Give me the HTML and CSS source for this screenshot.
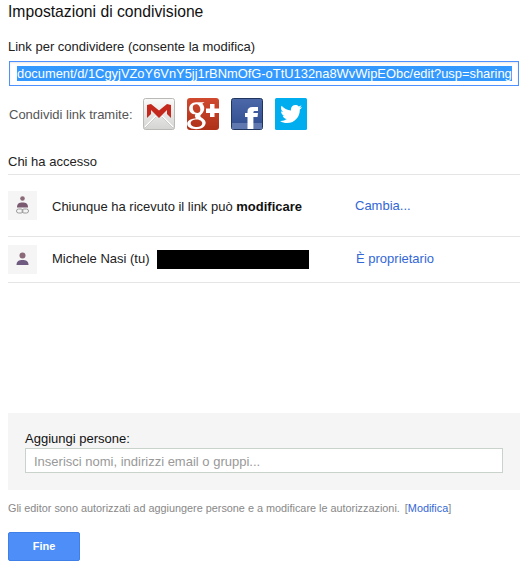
FILE: index.html
```html
<!DOCTYPE html>
<html lang="it">
<head>
<meta charset="utf-8">
<title>Impostazioni di condivisione</title>
<link rel="stylesheet" href="styles.css">
</head>
<body>
<main class="dialog">
  <h1 class="title">Impostazioni di condivisione</h1>
  <div class="link-label">Link per condividere (consente la modifica)</div>
  <div class="link-box"><span class="link-text">document/d/1CgyjVZoY6VnY5jj1rBNmOfG-oTtU132na8WvWipEObc/edit?usp=sharing</span></div>
  <div class="share-row">
    <span class="share-label">Condividi link tramite:</span>
    <div class="share-icons">
      <svg class="icon" viewBox="0 0 32 32" aria-label="Gmail">
        <defs><linearGradient id="gm" x1="0" y1="0" x2="0" y2="1"><stop offset="0" stop-color="#fafafa"/><stop offset="1" stop-color="#d4d4d2"/></linearGradient></defs>
        <rect x=".5" y=".5" width="31" height="31" rx="2" fill="url(#gm)" stroke="#b9b9b5"/>
        <path d="M2 29 L13 18 M30 29 L19 18" stroke="#fff" stroke-width="1.4" fill="none"/>
        <path d="M2 30 L13 19 M30 30 L19 19" stroke="#bdbdb9" stroke-width=".7" fill="none"/>
        <path d="M4 7 L8 6 L16 12.500 L24 6 L28 7 L28 20 L24 16 L24 12 L16 20 L8 12 L8 16 L4 20 Z" fill="#c4281c"/>
      </svg>
      <svg class="icon" viewBox="0 0 32 32" aria-label="Google+">
        <defs><linearGradient id="gp" x1="0" y1="0" x2="0" y2="1"><stop offset="0" stop-color="#d04a2f"/><stop offset="1" stop-color="#ad3017"/></linearGradient></defs>
        <rect width="32" height="32" rx="3" fill="url(#gp)"/>
        <path d="M23 6 H27.500 V10.500 H32 V15 H27.500 V19 H23 V15 H19 V10.500 H23 Z" fill="#fff"/>
        <path d="M15.500 6 H8.500 C4.500 6 2.500 9 2.500 12 C2.500 15 4.700 17.200 7.800 17.200 C6.900 19 7.400 19.800 8.300 20.800 C4.800 21 .8 22.500 .8 26 C.8 29.500 4.500 31 8.500 31 C13 31 16.500 28.500 16.500 25 C16.500 21.500 12 20.500 12 18.800 C12 17.300 15.300 16 15.300 11.500 C15.300 9.800 14.500 8.500 13.600 7.500 L15.500 6 Z M8.500 8 C10.700 8 12 10.500 12 13 C12 15 10.800 16 9.300 16 C7 16 5.600 13.500 5.600 11 C5.600 9 6.800 8 8.500 8 Z M8.800 22 C11.500 22 13.600 23.500 13.600 25.600 C13.600 27.700 11.700 29 9 29 C6 29 3.800 27.600 3.800 25.400 C3.800 23.300 6 22 8.800 22 Z" fill="#fff" fill-rule="evenodd" transform="translate(-.8 -2.300) scale(1.180 1.080)"/>
      </svg>
      <svg class="icon" viewBox="0 0 32 32" aria-label="Facebook">
        <defs><linearGradient id="fb" x1="0" y1="0" x2="0" y2="1"><stop offset="0" stop-color="#4c68a8"/><stop offset="1" stop-color="#2f4c8e"/></linearGradient></defs>
        <rect x=".5" y=".5" width="31" height="31" rx="2" fill="url(#fb)" stroke="#21365f"/>
        <rect x="1" y="25" width="30" height="6" fill="#5f79b0"/>
        <path d="M16.500 31 V19 H14 V15 H16.500 V13.500 C16.500 10.500 18.200 9 21.500 9 H27 V13 H24 C22.800 13 22.400 13.500 22.400 14.500 V15 H27 L26.500 19 H22.400 V31 Z" fill="#fff"/>
      </svg>
      <svg class="icon" viewBox="0 0 32 32" aria-label="Twitter">
        <rect width="32" height="32" rx="1.500" fill="#00aeef"/>
        <path d="M26.500 8.500 C25.700 8.900 24.900 9.100 24 9.200 C24.900 8.600 25.600 7.800 25.900 6.800 C25 7.300 24.100 7.700 23.100 7.900 C22.300 7 21.100 6.500 19.800 6.500 C17.300 6.500 15.300 8.500 15.300 11 C15.300 11.400 15.300 11.700 15.400 12 C11.600 11.800 8.300 10 6 7.300 C5.600 8 5.400 8.700 5.400 9.500 C5.400 11.100 6.200 12.500 7.400 13.300 C6.700 13.300 6 13.100 5.400 12.700 C5.400 15 7 16.800 9 17.200 C8.300 17.400 7.700 17.400 7 17.300 C7.600 19.100 9.300 20.400 11.200 20.500 C9.200 22 6.900 22.600 4.500 22.400 C6.500 23.700 8.900 24.500 11.400 24.500 C19.700 24.500 24.200 17.600 24.200 11.700 V11.100 C25.100 10.400 25.900 9.500 26.500 8.500 Z" fill="#fff" transform="translate(.6 .5)"/>
      </svg>
    </div>
  </div>

  <h2 class="access-title">Chi ha accesso</h2>
  <div class="access-list">
    <div class="access-row access-row-link">
      <div class="avatar">
        <svg class="avatar-icon" viewBox="0 0 29 29">
          <circle cx="14.500" cy="7.500" r="2.300" fill="#8a6a78"/>
          <path d="M9 16.500 C9 12.500 11 11.500 14.500 11.500 C18 11.500 20 12.500 20 16.500 Z" fill="#7a5a70"/>
          <rect x="8.500" y="18" width="6.500" height="4" rx="2" fill="none" stroke="#9a9a9a"/>
          <rect x="14" y="18" width="6.500" height="4" rx="2" fill="none" stroke="#9a9a9a"/>
        </svg>
      </div>
      <div class="who who-link">Chiunque ha ricevuto il link può <b>modificare</b></div>
      <a class="role">Cambia...</a>
    </div>
    <div class="access-row access-row-owner">
      <div class="avatar">
        <svg class="avatar-icon" viewBox="0 0 29 29">
          <circle cx="14.500" cy="10.500" r="3" fill="#8a6a78"/>
          <path d="M8.500 20 C8.500 16 11 15 14.500 15 C18 15 20.500 16 20.500 20 Z" fill="#6f5a80"/>
        </svg>
      </div>
      <div class="who who-owner"><span class="owner-name">Michele Nasi (tu)</span><span class="redacted"></span></div>
      <a class="role role-owner">È proprietario</a>
    </div>
  </div>

  <section class="add-panel">
    <label class="add-label">Aggiungi persone:</label>
    <div class="add-input">Inserisci nomi, indirizzi email o gruppi...</div>
  </section>

  <p class="note">Gli editor sono autorizzati ad aggiungere persone e a modificare le autorizzazioni. <span class="note-link">[<a>Modifica</a>]</span></p>

  <button class="done" type="button">Fine</button>
</main>
</body>
</html>
```

FILE: styles.css
```css
* { box-sizing: border-box; }
html, body { margin: 0; padding: 0; background: #fff; }
body { font-family: "Liberation Sans", Arial, sans-serif; color: #111; height: 568px; overflow: hidden; }
.dialog { width: 520px; padding: 0 0 0 8px; }
.title { margin: 0; padding-top: 3px; font-size: 15.700px; font-weight: 400; line-height: 18px; color: #111; }
.link-label { margin-top: 18px; font-size: 13px; line-height: 16px; color: #222; }
.link-box { margin: 6px 0 0 1px; width: 510px; height: 25px; border: 1px solid #4d90fe; box-shadow: inset 0 1px 2px rgba(0,0,0,.1); padding: 4px 7px; overflow: hidden; white-space: nowrap; font-size: 12.900px; line-height: 15px; }
.link-text { background: #3399ff; color: #fff; }
.share-row { display: flex; align-items: center; margin-top: 12px; padding-left: 1px; height: 32px; }
.share-label { width: 134px; font-size: 13px; color: #555; }
.share-icons { display: flex; gap: 12px; }
.icon { width: 32px; height: 32px; display: block; }
.access-title { margin: 24px 0 0; font-size: 13px; font-weight: 400; line-height: 15px; color: #222; }
.access-list { margin-top: 5px; width: 512px; border-top: 1px solid #e5e5e5; }
.access-row { display: flex; align-items: center; border-bottom: 1px solid #e5e5e5; }
.access-row-link { height: 62px; }
.access-row-owner { height: 46px; }
.avatar { width: 29px; height: 29px; background: #f5f5f5; flex: none; }
.avatar-icon { display: block; width: 29px; height: 29px; }
.who { width: 318px; padding-left: 15px; font-size: 13px; color: #222; }
.who-link { padding-top: 2px; }
.who b { font-weight: 700; color: #111; }
.who-owner { display: flex; align-items: center; }
.owner-name { padding-bottom: 3px; }
.redacted { display: block; width: 152px; height: 19px; margin-left: 7px; background: #000; }
.role { font-size: 13px; color: #3367d6; }
.role-owner { margin-left: 1px; padding-bottom: 3px; }
.add-panel { margin-top: 130px; width: 512px; height: 77px; background: #f5f5f5; padding: 18px 17px 0; }
.add-label { display: block; font-size: 13px; line-height: 16px; color: #111; }
.add-input { margin-top: 1px; width: 478px; height: 25px; background: #fff; border: 1px solid #c9d3cc; padding: 0 8px; font-size: 13px; line-height: 25px; color: #999; }
.note { margin: 12px 0 0; font-size: 10.850px; line-height: 13px; color: #888; }
.note-link { margin-left: 2px; color: #888; }
.note-link a { color: #3367d6; }
.done { display: block; margin-top: 17px; width: 72px; height: 29px; padding: 0 0 2px; background: #4d8ef8; border: 1px solid #3f7fe8; border-radius: 2px; color: #fff; font: 700 11px "Liberation Sans", Arial, sans-serif; }
```
